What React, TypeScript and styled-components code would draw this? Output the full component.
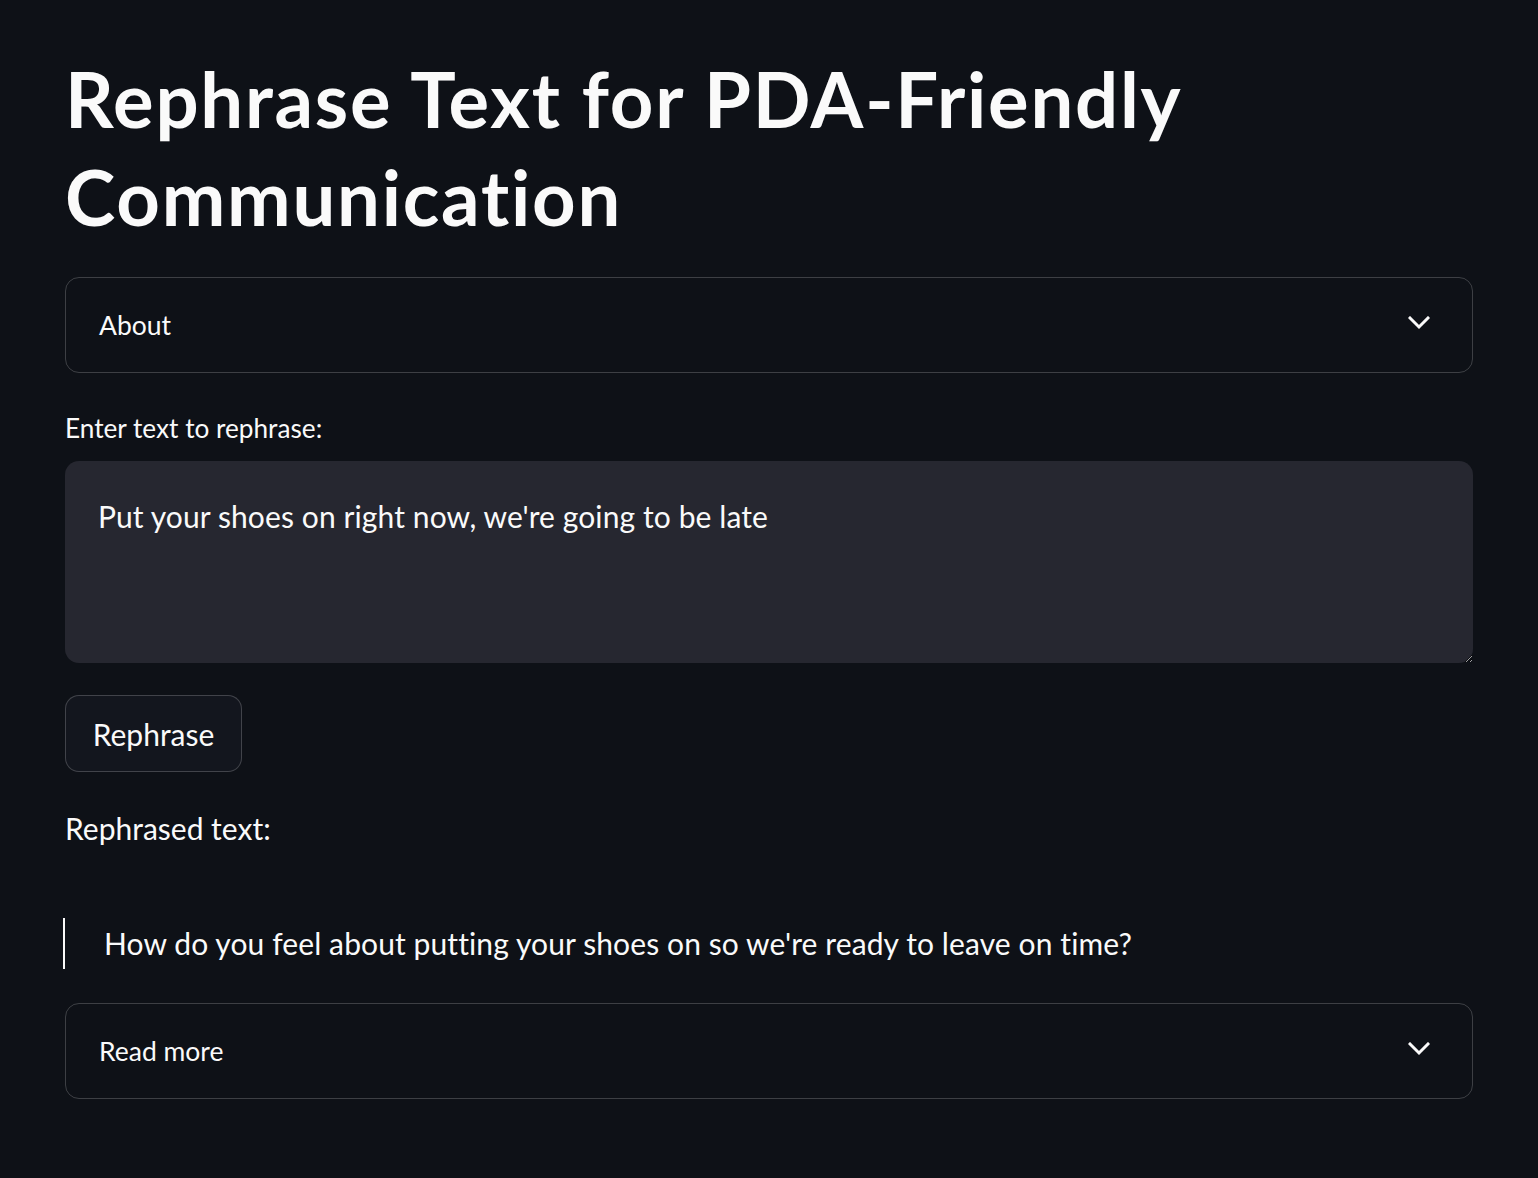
import React from "react";
import styled, { createGlobalStyle } from "styled-components";

const Global = createGlobalStyle`
  html, body {
    margin: 0;
    padding: 0;
    background: #0e1117;
  }
  body {
    font-family: Lato, "Noto Sans", sans-serif;
    color: #fafafa;
  }
  * { box-sizing: border-box; }
`;

const Page = styled.main`
  min-height: 1178px;
  background: #0e1117;
  padding: 50px 65px 0 65px;
  display: flex;
  flex-direction: column;
`;

const Title = styled.h1`
  margin: 0;
  font-size: 76px;
  line-height: 98px;
  font-weight: 700;
  letter-spacing: 1.75px;
  color: #fafafa;
`;

const Expander = styled.details<{ $mt: number }>`
  margin-top: ${(p) => p.$mt}px;
  border: 1px solid rgba(250, 250, 250, 0.2);
  border-radius: 14px;
  height: 96px;
`;

const ExpanderHeader = styled.summary`
  list-style: none;
  height: 94px;
  display: flex;
  align-items: center;
  justify-content: space-between;
  padding: 0 42px 0 33px;
  font-size: 26.5px;
  cursor: pointer;
  &::-webkit-details-marker { display: none; }
`;

const Chevron = styled.svg`
  width: 22px;
  height: 14px;
  margin-top: -4px;
`;

const Label = styled.label`
  margin-top: 35px;
  font-size: 26.2px;
  line-height: 40px;
`;

const TextArea = styled.textarea`
  margin-top: 13px;
  height: 202px;
  width: 100%;
  background: #262730;
  color: #fafafa;
  border: none;
  border-radius: 14px;
  padding: 32px 33px;
  font-family: Lato, "Noto Sans", sans-serif;
  font-size: 30px;
  letter-spacing: 0.1px;
  line-height: 46.4px;
  resize: vertical;
  outline: none;
  color-scheme: dark;
`;

const Button = styled.button`
  margin-top: 32px;
  align-self: flex-start;
  height: 77px;
  width: 177px;
  padding: 0;
  background: #13161e;
  color: #fafafa;
  border: 1px solid rgba(250, 250, 250, 0.2);
  border-radius: 14px;
  font-family: Lato, "Noto Sans", sans-serif;
  font-size: 30px;
  cursor: pointer;
`;

const Paragraph = styled.p`
  margin: 33px 0 0 0;
  font-size: 30px;
  line-height: 46.4px;
`;

const Quote = styled.blockquote`
  margin: 67px 0 0 -2px;
  border-left: 2px solid #fafafa;
  padding-left: 39px;
  font-size: 30px;
  letter-spacing: 0.1px;
  line-height: 51px;
`;

const ChevronIcon = () => (
  <Chevron viewBox="0 0 22 14" fill="none">
    <polyline
      points="2,2 11,11 20,2"
      stroke="#fafafa"
      strokeWidth="3"
      strokeLinecap="square"
      strokeLinejoin="miter"
    />
  </Chevron>
);

export default function App() {
  return (
    <>
      <Global />
      <Page>
        <Title>
          Rephrase Text for PDA-Friendly
          <br />
          Communication
        </Title>
        <Expander $mt={31}>
          <ExpanderHeader>
            <span>About</span>
            <ChevronIcon />
          </ExpanderHeader>
        </Expander>
        <Label htmlFor="src">Enter text to rephrase:</Label>
        <TextArea
          id="src"
          defaultValue="Put your shoes on right now, we're going to be late"
        />
        <Button>Rephrase</Button>
        <Paragraph>Rephrased text:</Paragraph>
        <Quote>
          How do you feel about putting your shoes on so we're ready to leave on time?
        </Quote>
        <Expander $mt={34}>
          <ExpanderHeader>
            <span>Read more</span>
            <ChevronIcon />
          </ExpanderHeader>
        </Expander>
      </Page>
    </>
  );
}
